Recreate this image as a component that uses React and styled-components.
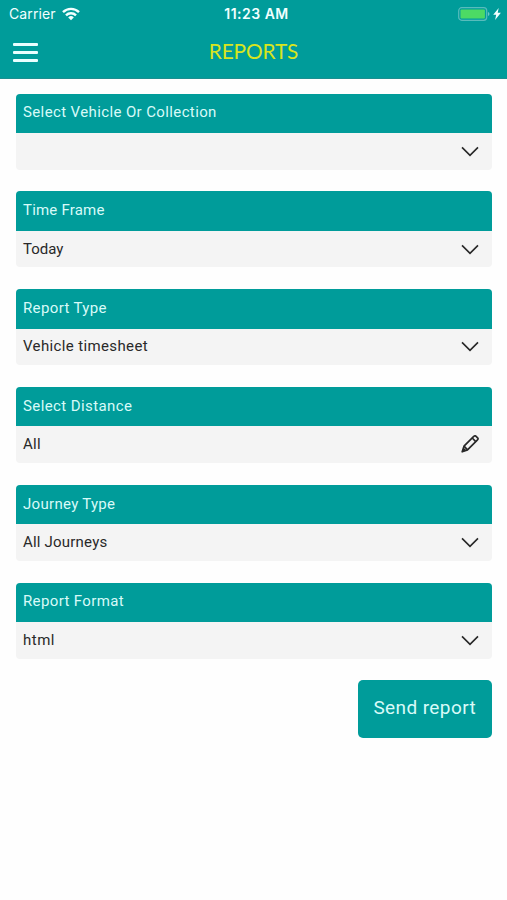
import React from "react";
import styled, { createGlobalStyle } from "styled-components";

const GlobalStyle = createGlobalStyle`
  * { box-sizing: border-box; }
  body { margin: 0; background: #fefefe; }
`;

const Screen = styled.div`
  width: 100%;
  min-height: 900px;
  background: #fefefe;
  font-family: Roboto, sans-serif;
`;

const Header = styled.header`
  height: 78.5px;
  background: #009c9a;
  border-bottom: 1px solid #1b8f90;
`;

const StatusBar = styled.div`
  height: 27px;
  padding: 0 6px 0 9px;
  display: grid;
  grid-template-columns: 1fr auto 1fr;
  align-items: center;
  color: #f2ffff;
  font-family: Inter, sans-serif;
`;

const StatusGroup = styled.div`
  display: flex;
  align-items: center;
  justify-content: ${(p) => (p.$end ? "flex-end" : "flex-start")};
  gap: ${(p) => (p.$end ? "3px" : "6px")};
`;

const Carrier = styled.span`
  font-size: 14px;
  letter-spacing: 0.1px;
`;

const Clock = styled.time`
  font-size: 14px;
  font-weight: 600;
  letter-spacing: 0.5px;
  padding-left: 3px;
`;

const NavBar = styled.nav`
  height: 50px;
  padding: 0 13px;
  display: grid;
  grid-template-columns: 1fr auto 1fr;
  align-items: center;
`;

const MenuButton = styled.button`
  width: 25px;
  height: 19px;
  padding: 0;
  border: 0;
  background: none;
  display: flex;
  flex-direction: column;
  justify-content: space-between;
`;

const MenuLine = styled.span`
  width: 100%;
  height: 3px;
  border-radius: 1px;
  background: #e9ffff;
`;

const Title = styled.h1`
  margin: -3px 0 0;
  color: #d8e51e;
  font-family: Lato, sans-serif;
  font-size: 20.8px;
  font-weight: 400;
  line-height: 24px;
  letter-spacing: -0.1px;
`;

const Form = styled.main`
  padding: 15.2px 15px 0 15.5px;
  display: flex;
  flex-direction: column;
  gap: 21.8px;
`;

const Field = styled.section`
  height: 76px;
  border-radius: 4px;
  overflow: hidden;
  background: #f4f4f4;
`;

const Label = styled.div`
  height: 39.3px;
  padding: 0 7.5px 2px;
  display: flex;
  align-items: center;
  background: #009c9a;
  color: #d8faf8;
  font-size: 15px;
  letter-spacing: ${(p) => p.$spacing}px;
`;

const Value = styled.div`
  height: 36.7px;
  padding: 0 13.2px 1px 7.5px;
  display: flex;
  align-items: center;
  justify-content: space-between;
  color: #292929;
  font-size: 15px;
  letter-spacing: ${(p) => p.$spacing}px;
`;

const SendButton = styled.button`
  align-self: flex-end;
  width: 134.5px;
  height: 58px;
  padding: 0 0 3px;
  border: 0;
  border-radius: 5px;
  background: #009c9a;
  color: #d8faf8;
  font-family: inherit;
  font-size: 19px;
  letter-spacing: 0.4px;
`;

const WifiIcon = () => (
  <svg width="18" height="14" viewBox="0 0 18 14" fill="none" stroke="currentColor" strokeWidth="2.4">
    <path d="M1 5.2a11.4 11.4 0 0 1 16 0" />
    <path d="M4 8.3a7.1 7.1 0 0 1 10 0" />
    <path d="M9 13.2 6.2 10.4a4 4 0 0 1 5.6 0Z" fill="currentColor" stroke="none" />
  </svg>
);

const BatteryIcon = () => (
  <svg width="32" height="14" viewBox="0 0 32 14">
    <rect x="0.7" y="0.7" width="28" height="12.6" rx="3" fill="none" stroke="#58bcbc" strokeWidth="1.2" />
    <rect x="2.5" y="2.5" width="24.4" height="9" rx="1" fill="#4cda64" />
    <path d="M30 5v4q1.5-.6 1.5-2T30 5Z" fill="#70c8c8" />
  </svg>
);

const BoltIcon = () => (
  <svg width="8" height="14" viewBox="0 0 8 14" fill="currentColor">
    <path d="M5.7 1 .2 7.8h3L2.1 13 7.9 5.7H4.7Z" />
  </svg>
);

const ChevronIcon = () => (
  <svg width="18" height="12" viewBox="0 0 18 12" fill="none" stroke="#292929" strokeWidth="1.6">
    <path d="m1 2.4 8 8 8-8" />
  </svg>
);

const PencilIcon = () => (
  <svg width="18" height="18" viewBox="0 0 18 18" fill="none" stroke="#292929" strokeWidth="1.7" strokeLinejoin="round">
    <path d="m1.2 16.8 1.8-5.6 9-9 1.1-1q1-.8 2 .1l1.5 1.5q.9 1 0 1.9l-1.1 1.2-9 9Z" />
    <path d="m11.2 3 3.8 3.8M3 11.2l3.6 3.6" />
    <path d="m1 17 1.4-4.6 3.2 3.2Z" fill="#292929" stroke="none" />
  </svg>
);

const fields = [
  { label: "Select Vehicle Or Collection", labelSpacing: 0.38, value: "" },
  { label: "Time Frame", labelSpacing: 0.2, value: "Today", valueSpacing: 0 },
  { label: "Report Type", labelSpacing: 0.37, value: "Vehicle timesheet", valueSpacing: 0.37 },
  { label: "Select Distance", labelSpacing: 0.4, value: "All", valueSpacing: 0.3, editable: true },
  { label: "Journey Type", labelSpacing: 0.3, value: "All Journeys", valueSpacing: 0.2 },
  { label: "Report Format", labelSpacing: 0.37, value: "html", valueSpacing: 0.5 },
];

export default function App() {
  return (
    <Screen>
      <GlobalStyle />
      <Header>
        <StatusBar>
          <StatusGroup>
            <Carrier>Carrier</Carrier>
            <WifiIcon />
          </StatusGroup>
          <Clock>11:23 AM</Clock>
          <StatusGroup $end>
            <BatteryIcon />
            <BoltIcon />
          </StatusGroup>
        </StatusBar>
        <NavBar>
          <MenuButton aria-label="Menu">
            <MenuLine />
            <MenuLine />
            <MenuLine />
          </MenuButton>
          <Title>REPORTS</Title>
        </NavBar>
      </Header>
      <Form>
        {fields.map((f) => (
          <Field key={f.label}>
            <Label $spacing={f.labelSpacing}>{f.label}</Label>
            <Value $spacing={f.valueSpacing || 0}>
              <span>{f.value}</span>
              {f.editable ? <PencilIcon /> : <ChevronIcon />}
            </Value>
          </Field>
        ))}
        <SendButton>Send report</SendButton>
      </Form>
    </Screen>
  );
}
